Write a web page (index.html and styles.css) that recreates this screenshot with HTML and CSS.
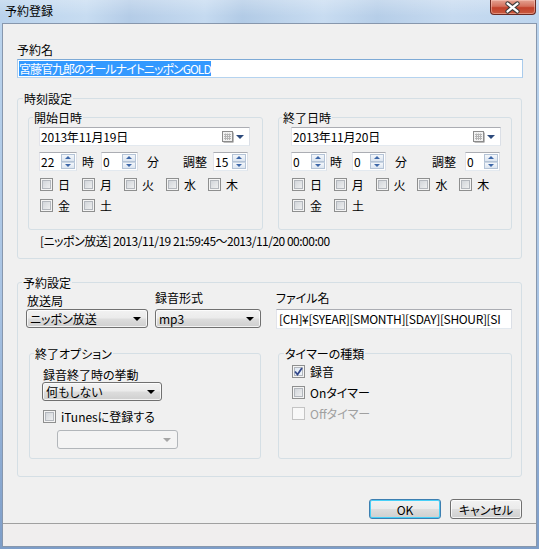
FILE: index.html
```html
<!DOCTYPE html>
<html lang="ja">
<head>
<meta charset="utf-8">
<title>予約登録</title>
<link rel="stylesheet" href="styles.css">
</head>
<body>
<div class="window">
  <div class="titlebar">
    <span class="title">予約登録</span>
    <div class="close">
      <svg width="46" height="15" viewBox="0 0 46 15">
        <path d="M18 3.5 L28 11.5 M28 3.5 L18 11.5" stroke="#3b3b3b" stroke-width="4.6" stroke-linecap="round"/>
        <path d="M18 3.5 L28 11.5 M28 3.5 L18 11.5" stroke="#ffffff" stroke-width="2.4" stroke-linecap="round"/>
      </svg>
    </div>
  </div>
  <div class="client">
    <div class="content">
      <div class="lbl">予約名</div>
      <div class="textbox name"><span class="sel">宮藤官九郎のオールナイトニッポンGOLD</span></div>

      <fieldset class="group time">
        <legend>時刻設定</legend>
        <div class="dt-row">
          <fieldset class="group dt start">
            <legend>開始日時</legend>
            <div class="datepicker">
              <span class="dval">2013年11月19日</span>
              <svg class="cal" width="12" height="12" viewBox="0 0 12 12">
                <rect x="1.5" y="1.5" width="10" height="10" fill="#7d7d7d"/>
                <rect x="0.5" y="0.5" width="10" height="10" fill="#f2f2f2" stroke="#8c8c8c"/>
                <path d="M2 3.5H9M2 5.5H9M2 7.5H9M3.5 2.5V9M5.5 2.5V9M7.5 2.5V9" stroke="#b4b4b4" stroke-width="1"/>
              </svg>
              <i class="ddarrow"></i>
            </div>
            <div class="spin-row">
              <div class="spin sa1"><span class="v">22</span><div class="sbs"><div class="sb"><i class="up"></i></div><div class="sb"><i class="dn"></i></div></div></div>
              <span class="u ua1">時</span>
              <div class="spin sa2"><span class="v">0</span><div class="sbs"><div class="sb"><i class="up"></i></div><div class="sb"><i class="dn"></i></div></div></div>
              <span class="u ua2">分</span>
              <span class="u ua3">調整</span>
              <div class="spin sa3"><span class="v">15</span><div class="sbs"><div class="sb"><i class="up"></i></div><div class="sb"><i class="dn"></i></div></div></div>
            </div>
            <div class="cbrow first">
              <label class="cbi"><span class="cb"></span>日</label>
              <label class="cbi"><span class="cb"></span>月</label>
              <label class="cbi"><span class="cb"></span>火</label>
              <label class="cbi"><span class="cb"></span>水</label>
              <label class="cbi"><span class="cb"></span>木</label>
            </div>
            <div class="cbrow">
              <label class="cbi"><span class="cb"></span>金</label>
              <label class="cbi"><span class="cb"></span>土</label>
            </div>
          </fieldset>
          <fieldset class="group dt end">
            <legend>終了日時</legend>
            <div class="datepicker">
              <span class="dval">2013年11月20日</span>
              <svg class="cal" width="12" height="12" viewBox="0 0 12 12">
                <rect x="1.5" y="1.5" width="10" height="10" fill="#7d7d7d"/>
                <rect x="0.5" y="0.5" width="10" height="10" fill="#f2f2f2" stroke="#8c8c8c"/>
                <path d="M2 3.5H9M2 5.5H9M2 7.5H9M3.5 2.5V9M5.5 2.5V9M7.5 2.5V9" stroke="#b4b4b4" stroke-width="1"/>
              </svg>
              <i class="ddarrow"></i>
            </div>
            <div class="spin-row">
              <div class="spin sb1"><span class="v">0</span><div class="sbs"><div class="sb"><i class="up"></i></div><div class="sb"><i class="dn"></i></div></div></div>
              <span class="u ub1">時</span>
              <div class="spin sb2"><span class="v">0</span><div class="sbs"><div class="sb"><i class="up"></i></div><div class="sb"><i class="dn"></i></div></div></div>
              <span class="u ub2">分</span>
              <span class="u ub3">調整</span>
              <div class="spin sb3"><span class="v">0</span><div class="sbs"><div class="sb"><i class="up"></i></div><div class="sb"><i class="dn"></i></div></div></div>
            </div>
            <div class="cbrow first">
              <label class="cbi"><span class="cb"></span>日</label>
              <label class="cbi"><span class="cb"></span>月</label>
              <label class="cbi"><span class="cb"></span>火</label>
              <label class="cbi"><span class="cb"></span>水</label>
              <label class="cbi"><span class="cb"></span>木</label>
            </div>
            <div class="cbrow">
              <label class="cbi"><span class="cb"></span>金</label>
              <label class="cbi"><span class="cb"></span>土</label>
            </div>
          </fieldset>
        </div>
        <div class="summary">[ニッポン放送] 2013/11/19 21:59:45～2013/11/20 00:00:00</div>
      </fieldset>

      <fieldset class="group res">
        <legend>予約設定</legend>
        <div class="fields">
          <div class="col col1">
            <div class="lab low">放送局</div>
            <div class="combo"><span class="cv">ニッポン放送</span><i class="carrow"></i></div>
          </div>
          <div class="col col2">
            <div class="lab">録音形式</div>
            <div class="combo"><span class="cv">mp3</span><i class="carrow"></i></div>
          </div>
          <div class="col col3">
            <div class="lab">ファイル名</div>
            <div class="textbox file"><span class="fv">[CH]¥[SYEAR][SMONTH][SDAY][SHOUR][SI</span></div>
          </div>
        </div>
        <div class="subrow">
          <fieldset class="group opt">
            <legend>終了オプション</legend>
            <div class="olab">録音終了時の挙動</div>
            <div class="combo behave"><span class="cv">何もしない</span><i class="carrow"></i></div>
            <div class="cbrow itunes">
              <label class="cbl"><span class="cb"></span>iTunesに登録する</label>
            </div>
            <div class="combo disabled"><span class="cv"></span><i class="carrow"></i></div>
          </fieldset>
          <fieldset class="group timer">
            <legend>タイマーの種類</legend>
            <div class="cbrow"><label class="cbl"><span class="cb checked"><svg width="9" height="9" viewBox="0 0 9 9"><path d="M1 4.5 L3.5 7.5 L8 1" fill="none" stroke="#32478a" stroke-width="1.8"/></svg></span>録音</label></div>
            <div class="cbrow"><label class="cbl"><span class="cb"></span>Onタイマー</label></div>
            <div class="cbrow"><label class="cbl dis"><span class="cb"></span>Offタイマー</label></div>
          </fieldset>
        </div>
      </fieldset>

      <div class="btns">
        <div class="btn default">OK</div>
        <div class="btn">キャンセル</div>
      </div>
    </div>
    <div class="status"></div>
  </div>
</div>
</body>
</html>
```

FILE: styles.css
```css
* { box-sizing: border-box; }
html, body { margin: 0; padding: 0; }
body {
  width: 539px;
  height: 549px;
  overflow: hidden;
  font-family: "Noto Sans CJK JP", "Noto Sans", sans-serif;
  font-size: 12px;
  line-height: 15px;
  font-feature-settings: "palt" 1;
  color: #000;
  background: linear-gradient(180deg, #bcd5ee 0%, #a8c3e3 55%, #7d9dc8 100%);
}
.window { height: 549px; display: flex; flex-direction: column; }

.titlebar {
  height: 23px;
  flex: none;
  display: flex;
  align-items: flex-start;
  padding-left: 5px;
  background:
    linear-gradient(180deg, rgba(255,255,255,0.25), rgba(255,255,255,0) 70%),
    linear-gradient(90deg, #b9d2ec 0%, #c7dcf1 16%, #b4cce7 24%, #c5daf0 38%, #b2cbe6 45%, #c8dcf1 60%, #b6cee8 70%, #c6daf0 84%, #bdd5ee 100%);
}
.title { margin-top: 3px; line-height: 15px; color: #000; }
.close {
  margin-left: auto;
  margin-right: 3px;
  width: 46px;
  height: 15px;
  border: 1px solid #6b2a22;
  border-top: none;
  border-radius: 0 0 4px 4px;
  background: linear-gradient(180deg, #e4a292 0%, #d4705c 45%, #c2412b 55%, #c85a3f 100%);
  box-shadow: inset 0 0 0 1px rgba(255,210,200,0.45);
  overflow: hidden;
  display: flex;
}
.close svg { display: block; margin-left: -1px; }

.client {
  flex: 1;
  min-height: 0;
  margin: 0 2px 2px;
  border: 1px solid #8797ad;
  background: #f0f0f0;
  display: flex;
  flex-direction: column;
}
.content { flex: 1; padding: 18px 14px 0 14px; }
.status {
  flex: none;
  height: 23px;
  border-top: 1px solid #a0a0a0;
  background: #f0eeee;
}

.lbl { line-height: 15px; }
.textbox {
  background: #fff;
  border: 1px solid;
  border-color: #abadb3 #dbdfe6 #e3e9ef #e2e3ea;
  white-space: nowrap;
  overflow: hidden;
}
.name {
  margin-top: 2px;
  width: 506px;
  height: 19px;
  padding: 1px 0 0 1px;
  border-color: #7eaad6 #a9cbec #b5d3ef #a9cbec;
}
.sel {
  display: inline-block;
  background: #3399ff;
  color: #fff;
  line-height: 15px;
  letter-spacing: -1px;
}

.group {
  margin: 0;
  padding: 0;
  min-width: 0;
  border: 1px solid #d5dfe5;
  border-radius: 3px;
}
.group > legend { padding: 0 1px; line-height: 15px; }

.time { margin-top: 13px; padding: 4px 9px 10px 10px; }
.time > legend { margin-left: -5px; }
.dt-row { display: flex; gap: 15px; }
.dt.start { width: 235px; padding: 2px 12px 13px 10px; }
.dt.end { width: 234px; padding: 2px 10px 13px 12px; }
.dt.start > legend { margin-left: -6px; }
.dt.end > legend { margin-left: -9px; }

.datepicker {
  height: 19px;
  display: flex;
  align-items: center;
  background: #fff;
  border: 1px solid;
  border-color: #abadb3 #dbdfe6 #e3e9ef #e2e3ea;
  padding-left: 1px;
}
.dval { flex: 1; letter-spacing: -0.2px; }
.cal { display: block; margin-top: 1px; }
.ddarrow {
  width: 0; height: 0;
  margin: 0 5px 0 2px;
  border-left: 4px solid transparent;
  border-right: 4px solid transparent;
  border-top: 4px solid #2d4a7c;
}

.spin-row { display: flex; align-items: center; height: 19px; margin-top: 6px; }
.spin {
  height: 19px;
  display: flex;
  background: #fff;
  border: 1px solid;
  border-color: #abadb3 #dbdfe6 #e3e9ef #e2e3ea;
}
.spin .v { flex: 1; line-height: 17px; padding-left: 1px; }
.sbs { width: 15px; display: flex; flex-direction: column; padding: 1px 1px 1px 0; }
.sb {
  flex: 1;
  display: flex;
  align-items: center;
  justify-content: center;
  border: 1px solid #b4c3d6;
  background: linear-gradient(180deg, #f4f7fb, #dce5f0);
}
.sb + .sb { border-top-color: #c9d5e3; }
.sb .up, .sb .dn { width: 0; height: 0; border-left: 3px solid transparent; border-right: 3px solid transparent; }
.sb .up { border-bottom: 3px solid #3d67a8; }
.sb .dn { border-top: 3px solid #3d67a8; }
.sa1 { width: 38px; }
.ua1 { margin-left: 5px; }
.sa2 { width: 37px; margin-left: 7px; }
.ua2 { margin-left: 9px; }
.ua3 { margin-left: 24px; }
.sa3 { width: 35px; margin-left: 6px; }
.sb1 { width: 36px; }
.ub1 { margin-left: 3px; }
.sb2 { width: 34px; margin-left: 10px; }
.ub2 { margin-left: 9px; }
.ub3 { margin-left: 25px; }
.sb3 { width: 35px; margin-left: 9px; }

.cbrow { display: flex; align-items: center; height: 21px; }
.cbrow.first { margin-top: 3px; }
.cbi { width: 42px; display: flex; align-items: center; gap: 5px; }
.cbrow .cbi:first-child { margin-left: 1px; }
.cbl { display: flex; align-items: center; gap: 5px; }
.cb {
  width: 13px;
  height: 13px;
  flex: none;
  border: 1px solid #8e8f8f;
  background: linear-gradient(135deg, #cbcfd5 0%, #e4e6e8 60%, #f6f6f6 100%);
  box-shadow: inset 0 0 0 1px #f4f4f4, inset 0 0 0 2px #b3b7bd;
  display: flex;
  align-items: center;
  justify-content: center;
}
.cb.checked { background: linear-gradient(135deg, #d9e4f2, #f6f9fc); }
.cb svg { display: block; }
.cbl.dis { color: #a0a0a0; }
.cbl.dis .cb { border-color: #c4c4c4; background: #f8f8f8; box-shadow: none; }

.summary { margin-top: 3px; padding-left: 12px; letter-spacing: -0.5px; }

.res { margin-top: 16px; padding: 0 9px 17px 8px; }
.res > legend { margin-left: -4px; }
.fields { display: flex; }
.col1 { width: 122px; }
.col2 { width: 106px; margin-left: 7px; }
.col3 { width: 236px; margin-left: 15px; }
.lab { height: 19px; padding-left: 1px; }
.lab.low { padding-top: 3px; }
.col2 .lab, .col3 .lab { margin-left: -1px; }

.combo {
  height: 19px;
  display: flex;
  align-items: center;
  border: 1px solid #707070;
  border-radius: 3px;
  background: linear-gradient(180deg, #f2f2f2 0%, #ebebeb 48%, #dddddd 52%, #cfcfcf 100%);
  box-shadow: inset 0 0 0 1px rgba(255,255,255,0.75);
  padding-left: 3px;
}
.cv { flex: 1; white-space: nowrap; }
.carrow {
  width: 0; height: 0;
  margin-right: 6px;
  border-left: 4px solid transparent;
  border-right: 4px solid transparent;
  border-top: 4px solid #000;
}
.file { height: 20px; padding: 1px 0 0 2px; }
.fv { letter-spacing: -0.35px; }

.subrow { display: flex; margin-top: 17px; }
.opt { width: 232px; margin-left: 3px; padding: 6px 9px 9px 12px; }
.opt > legend { margin-left: -8px; }
.timer { width: 234px; margin-left: 17px; padding: 0 9px 9px 13px; }
.timer > legend { margin-left: -8px; }
.olab { padding-left: 1px; }
.behave { width: 120px; }
.cbrow.itunes { margin-top: 5px; padding-left: 1px; }
.combo.disabled {
  width: 121px;
  margin-top: 3px;
  margin-left: 15px;
  border-color: #b2b6ba;
  background: #f4f4f4;
  box-shadow: none;
}
.combo.disabled .carrow { border-top-color: #a6a6a6; }

.btns { display: flex; justify-content: flex-end; gap: 9px; margin-top: 22px; }
.btn {
  width: 72px;
  height: 20px;
  display: flex;
  align-items: center;
  justify-content: center;
  border: 1px solid #707070;
  border-radius: 3px;
  background: linear-gradient(180deg, #f2f2f2 0%, #ebebeb 48%, #dddddd 52%, #cfcfcf 100%);
  box-shadow: inset 0 0 0 1px rgba(255,255,255,0.75);
}
.btn.default {
  border-color: #3c7fb1;
  box-shadow: inset 0 0 0 1px #48d0f8;
}
```
